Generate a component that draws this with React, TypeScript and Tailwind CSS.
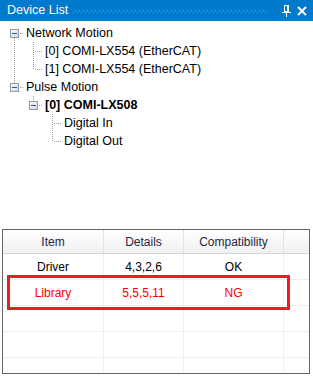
import React from 'react';

type Cell = 'blank' | 'pipe' | 'tee' | 'last' | 'boxDown' | 'boxUp';

interface TreeRow {
    cells: Cell[];
    label: string;
    bold?: boolean;
}

const rows: TreeRow[] = [
    { cells: ['boxDown'], label: 'Network Motion' },
    { cells: ['pipe', 'tee'], label: '[0] COMI-LX554 (EtherCAT)' },
    { cells: ['pipe', 'last'], label: '[1] COMI-LX554 (EtherCAT)' },
    { cells: ['boxUp'], label: 'Pulse Motion' },
    { cells: ['blank', 'boxUp'], label: '[0] COMI-LX508', bold: true },
    { cells: ['blank', 'blank', 'tee'], label: 'Digital In' },
    { cells: ['blank', 'blank', 'last'], label: 'Digital Out' },
];

const dot = { stroke: '#a0a0a0', strokeWidth: 1, strokeDasharray: '1 1' };

const TreeCell: React.FC<{ type: Cell }> = ({ type }) => {
    const isBox = type === 'boxDown' || type === 'boxUp';
    return (
        <svg width="19" height="18" className="shrink-0 block">
            {type === 'pipe' && <line x1="9.5" y1="0" x2="9.5" y2="18" {...dot} />}
            {type === 'tee' && <line x1="9.5" y1="0" x2="9.5" y2="18" {...dot} />}
            {type === 'last' && <line x1="9.5" y1="0" x2="9.5" y2="10" {...dot} />}
            {(type === 'tee' || type === 'last') && <line x1="11" y1="9.5" x2="19" y2="9.5" {...dot} />}
            {type === 'boxDown' && <line x1="9.5" y1="14" x2="9.5" y2="18" {...dot} />}
            {type === 'boxUp' && <line x1="9.5" y1="0" x2="9.5" y2="5" {...dot} />}
            {isBox && (
                <>
                    <line x1="15" y1="9.5" x2="19" y2="9.5" {...dot} />
                    <defs>
                        <linearGradient id="bx" x1="0" y1="0" x2="1" y2="1">
                            <stop offset="0" stopColor="#ffffff" />
                            <stop offset="1" stopColor="#d4d4d4" />
                        </linearGradient>
                    </defs>
                    <rect x="5.5" y="5.5" width="8" height="8" fill="url(#bx)" stroke="#8f9cad" />
                    <line x1="7" y1="9.5" x2="12" y2="9.5" stroke="#2c5aa0" strokeWidth="1" />
                </>
            )}
        </svg>
    );
};

const App: React.FC = () => {
    return (
        <div
            className="w-[313px] h-[378px] bg-white overflow-hidden relative"
            style={{ fontFamily: '"Liberation Sans", Arial, sans-serif' }}
        >
            {/* Title bar */}
            <div className="h-[21px] bg-[#007acc] flex items-center pl-[7px] pr-[6px]">
                <span className="text-white text-[12.5px] leading-none">Device List</span>
                <svg className="flex-1 mx-[5px] h-[6px]" height="6">
                    <defs>
                        <pattern id="grip" width="4" height="4" patternUnits="userSpaceOnUse">
                            <rect x="0" y="0" width="1" height="1" fill="#4fa3e3" />
                            <rect x="2" y="2" width="1" height="1" fill="#4fa3e3" />
                        </pattern>
                    </defs>
                    <rect x="0" y="1" width="100%" height="4" fill="url(#grip)" />
                </svg>
                {/* pin */}
                <svg width="9" height="12" className="ml-[10px] mr-[6px]">
                    <rect x="2.5" y="0.5" width="4" height="6" fill="none" stroke="white" />
                    <rect x="5" y="0" width="2" height="7" fill="white" />
                    <rect x="0" y="7" width="9" height="1" fill="white" />
                    <rect x="4" y="8" width="1" height="4" fill="white" />
                </svg>
                {/* close */}
                <svg width="10" height="10">
                    <path d="M1 1 L9 9 M9 1 L1 9" stroke="white" strokeWidth="2" />
                </svg>
            </div>

            {/* Tree */}
            <div className="h-[208px] pt-[3px] pl-[5px]">
                {rows.map((r, i) => (
                    <div key={i} className="h-[18px] flex items-center">
                        {r.cells.map((c, j) => (
                            <TreeCell key={j} type={c} />
                        ))}
                        <span className={`ml-[2px] text-[12.5px] text-black leading-none ${r.bold ? 'font-bold' : ''}`}>
                            {r.label}
                        </span>
                    </div>
                ))}
            </div>

            {/* Table */}
            <div className="ml-[2px] w-[308px] h-[145px] border border-[#646464] overflow-hidden relative text-[12px]">
                <div className="grid grid-cols-[101px_80px_100px_1fr] h-[24px] border-b border-[#d5d5d5] bg-gradient-to-b from-white to-[#eff0f2] text-[#1e2844]">
                    <div className="flex items-center justify-center border-r border-[#e2e3e6]">Item</div>
                    <div className="flex items-center justify-center border-r border-[#e2e3e6]">Details</div>
                    <div className="flex items-center justify-center border-r border-[#e2e3e6]">Compatibility</div>
                    <div />
                </div>
                {[
                    ['Driver', '4,3,2,6', 'OK', 'text-black'],
                    ['Library', '5,5,5,11', 'NG', 'text-[#ff0000]'],
                    ['', '', '', ''],
                    ['', '', '', ''],
                    ['', '', '', ''],
                ].map((row, i) => (
                    <div key={i} className={`grid grid-cols-[101px_80px_100px_1fr] h-[26px] border-b border-[#efefef] ${row[3]}`}>
                        <div className="flex items-center justify-center border-r border-[#efefef]">{row[0]}</div>
                        <div className="flex items-center justify-center border-r border-[#efefef]">{row[1]}</div>
                        <div className="flex items-center justify-center border-r border-[#efefef]">{row[2]}</div>
                        <div />
                    </div>
                ))}
                {/* highlight */}
                <div className="absolute left-[4px] top-[45px] w-[283px] h-[35px] border-[3px] border-[#ed1c24]" />
            </div>
        </div>
    );
};

export default App;
